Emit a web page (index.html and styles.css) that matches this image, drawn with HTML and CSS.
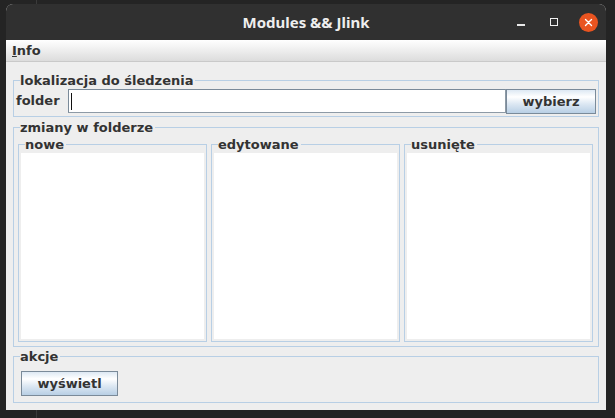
FILE: index.html
```html
<!DOCTYPE html>
<html lang="pl">
<head>
<meta charset="utf-8">
<title>Modules &amp;&amp; Jlink</title>
<link rel="stylesheet" href="styles.css">
</head>
<body>
<div class="window">
  <div class="titlebar">
    <div class="tb-side"></div>
    <div class="title">Modules &amp;&amp; Jlink</div>
    <div class="controls">
      <span class="ctl-min"></span>
      <span class="ctl-max"></span>
      <svg class="ctl-close" width="19" height="19" viewBox="0 0 19 19">
        <circle cx="9.5" cy="9.5" r="9.5" fill="#e95420"/>
        <path d="M6.5 6.5 L12.5 12.5 M12.5 6.5 L6.5 12.5" stroke="#ffffff" stroke-width="1.4" stroke-linecap="round"/>
      </svg>
    </div>
  </div>
  <div class="menubar"><span class="menu-item"><span class="mn">I</span>nfo</span></div>
  <div class="content">
    <fieldset class="group g-loc">
      <legend>lokalizacja do śledzenia</legend>
      <div class="loc-row">
        <span class="lbl">folder</span>
        <div class="field"><span class="caret"></span></div>
        <button class="btn btn-choose">wybierz</button>
      </div>
    </fieldset>
    <fieldset class="group g-changes">
      <legend>zmiany w folderze</legend>
      <div class="lists">
        <fieldset class="group sub"><legend>nowe</legend><div class="list"></div></fieldset>
        <fieldset class="group sub"><legend>edytowane</legend><div class="list"></div></fieldset>
        <fieldset class="group sub"><legend>usunięte</legend><div class="list"></div></fieldset>
      </div>
    </fieldset>
    <fieldset class="group g-actions">
      <legend>akcje</legend>
      <div class="actions-row">
        <button class="btn btn-show">wyświetl</button>
      </div>
    </fieldset>
  </div>
</div>
</body>
</html>
```
FILE: styles.css
```css
html, body {
  margin: 0;
  padding: 0;
}
body {
  width: 615px;
  height: 418px;
  overflow: hidden;
  background:
    linear-gradient(to right, transparent 36px, #3a3a3a 36px, #3a3a3a 37px, transparent 37px),
    #242424;
  font-family: "DejaVu Sans", "Liberation Sans", sans-serif;
}
.window {
  margin: 4px 0 0 6px;
  width: 600px;
  height: 406px;
  border-radius: 7px 7px 0 0;
  overflow: hidden;
  display: flex;
  flex-direction: column;
  background: #eeeeee;
}
.titlebar {
  height: 36px;
  flex: 0 0 36px;
  background: #303030;
  display: grid;
  grid-template-columns: 1fr auto 1fr;
  align-items: center;
}
.title {
  font-family: "Noto Sans", "DejaVu Sans", sans-serif;
  font-weight: 700;
  font-size: 15px;
  color: #eeeeee;
  line-height: 20px;
}
.controls {
  display: flex;
  align-items: center;
  justify-content: flex-end;
  padding-right: 8px;
}
.ctl-min {
  width: 8px;
  height: 2px;
  background: #e8e8e8;
  margin-top: 6px;
}
.ctl-max {
  width: 8px;
  height: 8px;
  box-sizing: border-box;
  border: 1px solid #f0f0f0;
  margin-left: 25px;
}
.ctl-close {
  display: block;
  margin-left: 21px;
}
.menubar {
  height: 21px;
  flex: 0 0 21px;
  border-bottom: 1px solid #c9c9c9;
  background: linear-gradient(to bottom, #ffffff, #dcdcdc);
  display: flex;
  align-items: center;
  padding-left: 6px;
}
.menu-item {
  font-weight: 700;
  font-size: 13px;
  line-height: 15px;
  color: #333333;
}
.mn {
  text-decoration: underline;
  text-underline-offset: 1px;
}
.content {
  flex: 1;
  padding: 11px 7px 7px;
  display: flex;
  flex-direction: column;
}
.group {
  margin: 0;
  padding: 0;
  min-width: 0;
  border: 1px solid #b8cfe5;
}
.group > legend {
  margin-left: 6px;
  padding: 0 2px 0 0;
  font-weight: 700;
  font-size: 13px;
  line-height: 15px;
  color: #333333;
}
.g-changes {
  margin-top: 3px;
}
.g-actions {
  margin-top: 2px;
}
.loc-row {
  display: flex;
  align-items: flex-start;
  padding: 1px 2px 2px 2px;
  height: 25px;
}
.lbl {
  flex: 0 0 52px;
  font-weight: 700;
  font-size: 13px;
  line-height: 24px;
  color: #333333;
}
.field {
  flex: 1;
  height: 24px;
  box-sizing: border-box;
  border: 1px solid #7a8a99;
  border-right-color: #8d9aa6;
  border-bottom-color: #8d9aa6;
  background: #ffffff;
  display: flex;
  align-items: center;
  padding-left: 2px;
}
.caret {
  width: 1px;
  height: 17px;
  background: #111111;
}
.btn {
  margin: 0;
  padding: 0;
  box-sizing: border-box;
  height: 25px;
  border: 1px solid #7a8a99;
  background: linear-gradient(to bottom, #dde8f3 0%, #ffffff 30%, #dde8f3 60%, #b8cfe5 100%);
  font-family: "DejaVu Sans", "Liberation Sans", sans-serif;
  font-weight: 700;
  font-size: 13px;
  line-height: 15px;
  color: #333333;
  text-align: center;
}
.btn-choose {
  flex: 0 0 90px;
  width: 90px;
}
.lists {
  display: grid;
  grid-template-columns: repeat(3, 189px);
  column-gap: 4px;
  padding: 2px 5px 4px 4px;
}
.sub {
  width: 189px;
  box-sizing: border-box;
}
.list {
  margin: 1px 2px 2px 2px;
  height: 186px;
  background: #ffffff;
}
.actions-row {
  padding: 7px 0 6px 7px;
  display: flex;
}
.btn-show {
  width: 97px;
}
```
